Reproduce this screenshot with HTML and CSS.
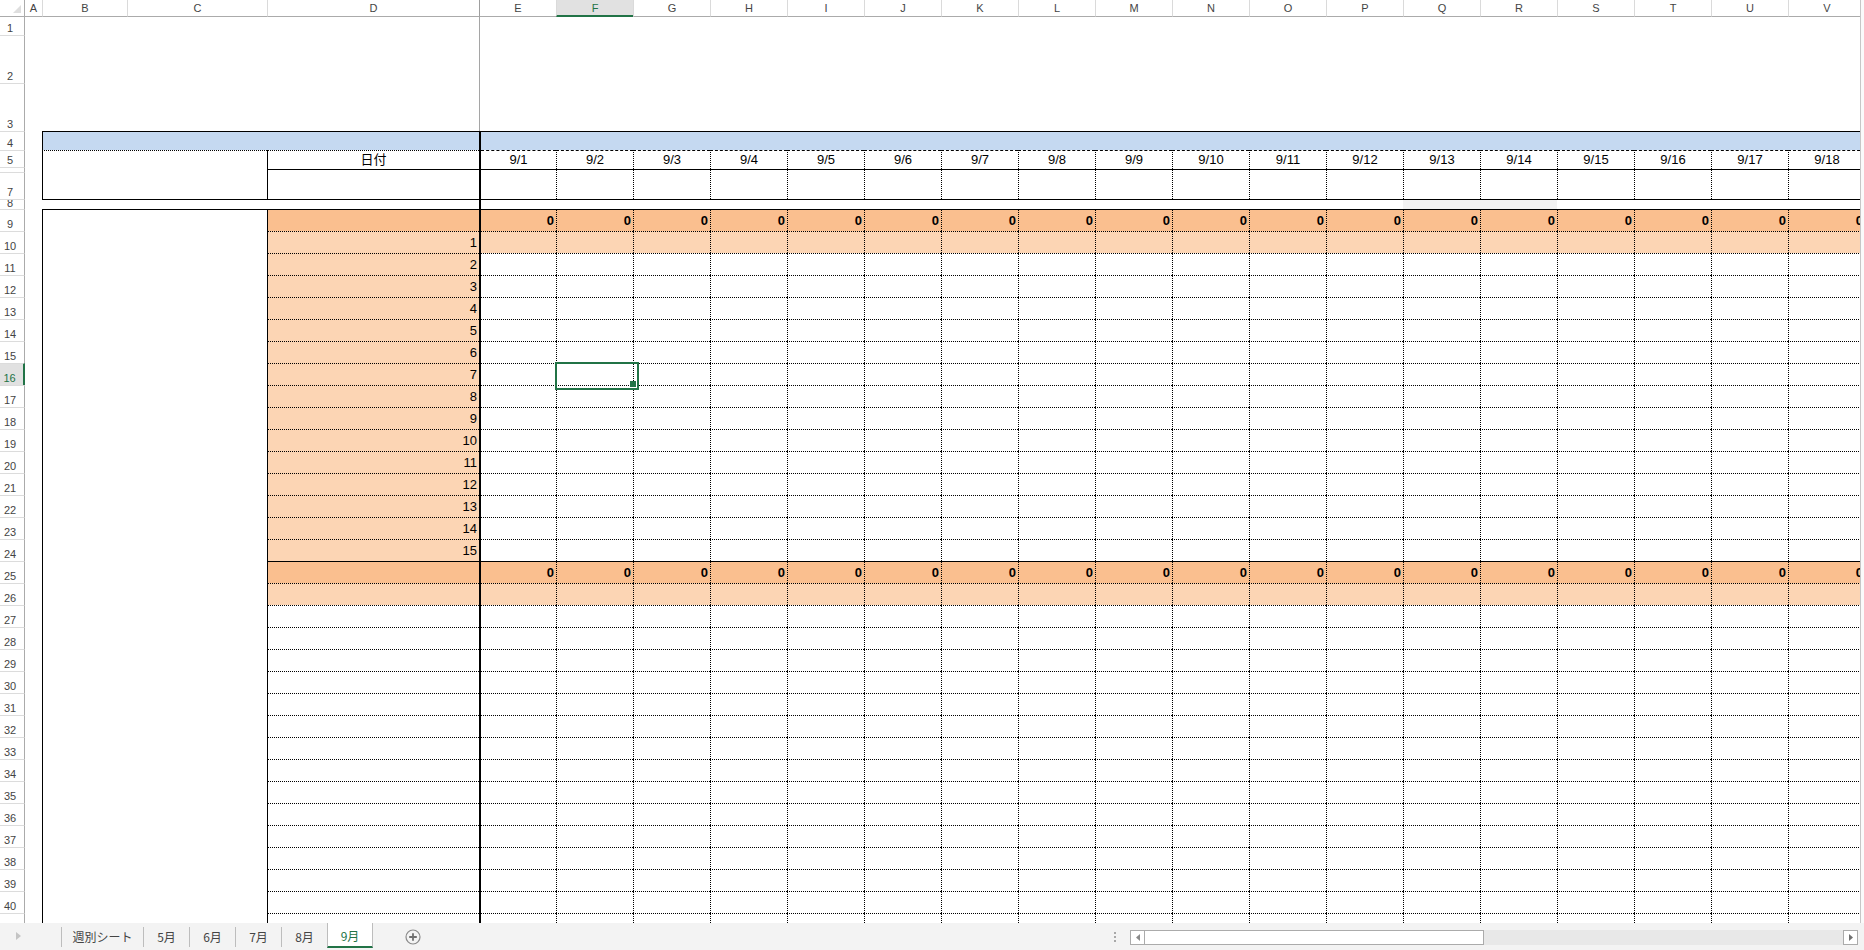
FILE: index.html
```html
<!DOCTYPE html>
<html lang="ja">
<head>
<meta charset="utf-8">
<title>9月</title>
<link rel="stylesheet" href="styles.css">
</head>
<body>
<div class="app">
 <div class="main">
  <div class="sheet">
   <div class="ch">
    <div class="corner"><svg width="8" height="8" viewBox="0 0 8 8"><polygon points="8,0 8,8 0,8" fill="#dedede"/></svg></div>
    <div class="ca">A</div><div class="cb">B</div><div class="cc">C</div><div class="cd">D</div>
    <div class="ce fz">E</div><div class="ce cur">F</div><div class="ce">G</div><div class="ce">H</div><div class="ce">I</div><div class="ce">J</div><div class="ce">K</div><div class="ce">L</div><div class="ce">M</div><div class="ce">N</div><div class="ce">O</div><div class="ce">P</div><div class="ce">Q</div><div class="ce">R</div><div class="ce">S</div><div class="ce">T</div><div class="ce">U</div><div class="ce">V</div>
   </div>
   <div class="body">
    <div class="rh">
     <div class="h18">1</div><div class="h48">2</div><div class="h48">3</div><div class="h19">4</div><div class="h17">5</div><div class="h5"></div><div class="h27">7</div><div class="h10">8</div>
     <div>9</div><div>10</div><div>11</div><div>12</div><div>13</div><div>14</div><div>15</div><div class="cur">16</div><div>17</div><div>18</div><div>19</div><div>20</div><div>21</div><div>22</div><div>23</div><div>24</div><div>25</div><div>26</div><div>27</div><div>28</div><div>29</div><div>30</div><div>31</div><div>32</div><div>33</div><div>34</div><div>35</div><div>36</div><div>37</div><div>38</div><div>39</div><div>40</div><div>41</div>
    </div>
    <div class="grid">
     <div class="row top"><p class="a"></p><p class="bc"></p><p class="d"></p><div class="rp"></div></div>
     <div class="row r4"><p class="a"></p><p class="bc"></p><p class="d"></p><div class="rp"></div></div>
     <div class="row r5"><p class="a"></p><p class="bc"></p><p class="d">日付</p><div class="rp"><i>9/1</i><i>9/2</i><i>9/3</i><i>9/4</i><i>9/5</i><i>9/6</i><i>9/7</i><i>9/8</i><i>9/9</i><i>9/10</i><i>9/11</i><i>9/12</i><i>9/13</i><i>9/14</i><i>9/15</i><i>9/16</i><i>9/17</i><i>9/18</i></div></div>
     <div class="row r67"><p class="a"></p><p class="bc"></p><p class="d"></p><div class="rp"><i></i><i></i><i></i><i></i><i></i><i></i><i></i><i></i><i></i><i></i><i></i><i></i><i></i><i></i><i></i><i></i><i></i><i></i></div></div>
     <div class="row r8"><p class="a"></p><p class="bc"></p><p class="d"></p><div class="rp"><i></i><i></i><i></i><i></i><i></i><i></i><i></i><i></i><i></i><i></i><i></i><i></i><i class="g"></i><i class="g"></i><i></i><i></i><i></i><i></i></div></div>
     <div class="row ts o1 r9"><p class="a"></p><p class="bc"></p><p class="d"></p><div class="rp"><i>0</i><i>0</i><i>0</i><i>0</i><i>0</i><i>0</i><i>0</i><i>0</i><i>0</i><i>0</i><i>0</i><i>0</i><i>0</i><i>0</i><i>0</i><i>0</i><i>0</i><i>0</i></div></div>
     <div class="row td o2"><p class="a"></p><p class="bc"></p><p class="d">1</p><div class="rp"><i></i><i></i><i></i><i></i><i></i><i></i><i></i><i></i><i></i><i></i><i></i><i></i><i></i><i></i><i></i><i></i><i></i><i></i></div></div>
     <div class="row td od"><p class="a"></p><p class="bc"></p><p class="d">2</p><div class="rp"><i></i><i></i><i></i><i></i><i></i><i></i><i></i><i></i><i></i><i></i><i></i><i></i><i></i><i></i><i></i><i></i><i></i><i></i></div></div>
     <div class="row td od"><p class="a"></p><p class="bc"></p><p class="d">3</p><div class="rp"><i></i><i></i><i></i><i></i><i></i><i></i><i></i><i></i><i></i><i></i><i></i><i></i><i></i><i></i><i></i><i></i><i></i><i></i></div></div>
     <div class="row td od"><p class="a"></p><p class="bc"></p><p class="d">4</p><div class="rp"><i></i><i></i><i></i><i></i><i></i><i></i><i></i><i></i><i></i><i></i><i></i><i></i><i></i><i></i><i></i><i></i><i></i><i></i></div></div>
     <div class="row td od"><p class="a"></p><p class="bc"></p><p class="d">5</p><div class="rp"><i></i><i></i><i></i><i></i><i></i><i></i><i></i><i></i><i></i><i></i><i></i><i></i><i></i><i></i><i></i><i></i><i></i><i></i></div></div>
     <div class="row td od"><p class="a"></p><p class="bc"></p><p class="d">6</p><div class="rp"><i></i><i></i><i></i><i></i><i></i><i></i><i></i><i></i><i></i><i></i><i></i><i></i><i></i><i></i><i></i><i></i><i></i><i></i></div></div>
     <div class="row td od"><p class="a"></p><p class="bc"></p><p class="d">7</p><div class="rp"><i></i><i class="sel"></i><i></i><i></i><i></i><i></i><i></i><i></i><i></i><i></i><i></i><i></i><i></i><i></i><i></i><i></i><i></i><i></i></div></div>
     <div class="row td od"><p class="a"></p><p class="bc"></p><p class="d">8</p><div class="rp"><i></i><i></i><i></i><i></i><i></i><i></i><i></i><i></i><i></i><i></i><i></i><i></i><i></i><i></i><i></i><i></i><i></i><i></i></div></div>
     <div class="row td od"><p class="a"></p><p class="bc"></p><p class="d">9</p><div class="rp"><i></i><i></i><i></i><i></i><i></i><i></i><i></i><i></i><i></i><i></i><i></i><i></i><i></i><i></i><i></i><i></i><i></i><i></i></div></div>
     <div class="row td od"><p class="a"></p><p class="bc"></p><p class="d">10</p><div class="rp"><i></i><i></i><i></i><i></i><i></i><i></i><i></i><i></i><i></i><i></i><i></i><i></i><i></i><i></i><i></i><i></i><i></i><i></i></div></div>
     <div class="row td od"><p class="a"></p><p class="bc"></p><p class="d">11</p><div class="rp"><i></i><i></i><i></i><i></i><i></i><i></i><i></i><i></i><i></i><i></i><i></i><i></i><i></i><i></i><i></i><i></i><i></i><i></i></div></div>
     <div class="row td od"><p class="a"></p><p class="bc"></p><p class="d">12</p><div class="rp"><i></i><i></i><i></i><i></i><i></i><i></i><i></i><i></i><i></i><i></i><i></i><i></i><i></i><i></i><i></i><i></i><i></i><i></i></div></div>
     <div class="row td od"><p class="a"></p><p class="bc"></p><p class="d">13</p><div class="rp"><i></i><i></i><i></i><i></i><i></i><i></i><i></i><i></i><i></i><i></i><i></i><i></i><i></i><i></i><i></i><i></i><i></i><i></i></div></div>
     <div class="row td od"><p class="a"></p><p class="bc"></p><p class="d">14</p><div class="rp"><i></i><i></i><i></i><i></i><i></i><i></i><i></i><i></i><i></i><i></i><i></i><i></i><i></i><i></i><i></i><i></i><i></i><i></i></div></div>
     <div class="row td od"><p class="a"></p><p class="bc"></p><p class="d">15</p><div class="rp"><i></i><i></i><i></i><i></i><i></i><i></i><i></i><i></i><i></i><i></i><i></i><i></i><i></i><i></i><i></i><i></i><i></i><i></i></div></div>
     <div class="row ts o1"><p class="a"></p><p class="bc"></p><p class="d"></p><div class="rp"><i>0</i><i>0</i><i>0</i><i>0</i><i>0</i><i>0</i><i>0</i><i>0</i><i>0</i><i>0</i><i>0</i><i>0</i><i>0</i><i>0</i><i>0</i><i>0</i><i>0</i><i>0</i></div></div>
     <div class="row td o2"><p class="a"></p><p class="bc"></p><p class="d"></p><div class="rp"><i></i><i></i><i></i><i></i><i></i><i></i><i></i><i></i><i></i><i></i><i></i><i></i><i></i><i></i><i></i><i></i><i></i><i></i></div></div>
     <div class="row td"><p class="a"></p><p class="bc"></p><p class="d"></p><div class="rp"><i></i><i></i><i></i><i></i><i></i><i></i><i></i><i></i><i></i><i></i><i></i><i></i><i></i><i></i><i></i><i></i><i></i><i></i></div></div>
     <div class="row td"><p class="a"></p><p class="bc"></p><p class="d"></p><div class="rp"><i></i><i></i><i></i><i></i><i></i><i></i><i></i><i></i><i></i><i></i><i></i><i></i><i></i><i></i><i></i><i></i><i></i><i></i></div></div>
     <div class="row td"><p class="a"></p><p class="bc"></p><p class="d"></p><div class="rp"><i></i><i></i><i></i><i></i><i></i><i></i><i></i><i></i><i></i><i></i><i></i><i></i><i></i><i></i><i></i><i></i><i></i><i></i></div></div>
     <div class="row td"><p class="a"></p><p class="bc"></p><p class="d"></p><div class="rp"><i></i><i></i><i></i><i></i><i></i><i></i><i></i><i></i><i></i><i></i><i></i><i></i><i></i><i></i><i></i><i></i><i></i><i></i></div></div>
     <div class="row td"><p class="a"></p><p class="bc"></p><p class="d"></p><div class="rp"><i></i><i></i><i></i><i></i><i></i><i></i><i></i><i></i><i></i><i></i><i></i><i></i><i></i><i></i><i></i><i></i><i></i><i></i></div></div>
     <div class="row td"><p class="a"></p><p class="bc"></p><p class="d"></p><div class="rp"><i></i><i></i><i></i><i></i><i></i><i></i><i></i><i></i><i></i><i></i><i></i><i></i><i></i><i></i><i></i><i></i><i></i><i></i></div></div>
     <div class="row td"><p class="a"></p><p class="bc"></p><p class="d"></p><div class="rp"><i></i><i></i><i></i><i></i><i></i><i></i><i></i><i></i><i></i><i></i><i></i><i></i><i></i><i></i><i></i><i></i><i></i><i></i></div></div>
     <div class="row td"><p class="a"></p><p class="bc"></p><p class="d"></p><div class="rp"><i></i><i></i><i></i><i></i><i></i><i></i><i></i><i></i><i></i><i></i><i></i><i></i><i></i><i></i><i></i><i></i><i></i><i></i></div></div>
     <div class="row td"><p class="a"></p><p class="bc"></p><p class="d"></p><div class="rp"><i></i><i></i><i></i><i></i><i></i><i></i><i></i><i></i><i></i><i></i><i></i><i></i><i></i><i></i><i></i><i></i><i></i><i></i></div></div>
     <div class="row td"><p class="a"></p><p class="bc"></p><p class="d"></p><div class="rp"><i></i><i></i><i></i><i></i><i></i><i></i><i></i><i></i><i></i><i></i><i></i><i></i><i></i><i></i><i></i><i></i><i></i><i></i></div></div>
     <div class="row td"><p class="a"></p><p class="bc"></p><p class="d"></p><div class="rp"><i></i><i></i><i></i><i></i><i></i><i></i><i></i><i></i><i></i><i></i><i></i><i></i><i></i><i></i><i></i><i></i><i></i><i></i></div></div>
     <div class="row td"><p class="a"></p><p class="bc"></p><p class="d"></p><div class="rp"><i></i><i></i><i></i><i></i><i></i><i></i><i></i><i></i><i></i><i></i><i></i><i></i><i></i><i></i><i></i><i></i><i></i><i></i></div></div>
     <div class="row td"><p class="a"></p><p class="bc"></p><p class="d"></p><div class="rp"><i></i><i></i><i></i><i></i><i></i><i></i><i></i><i></i><i></i><i></i><i></i><i></i><i></i><i></i><i></i><i></i><i></i><i></i></div></div>
     <div class="row td"><p class="a"></p><p class="bc"></p><p class="d"></p><div class="rp"><i></i><i></i><i></i><i></i><i></i><i></i><i></i><i></i><i></i><i></i><i></i><i></i><i></i><i></i><i></i><i></i><i></i><i></i></div></div>
     <div class="row td"><p class="a"></p><p class="bc"></p><p class="d"></p><div class="rp"><i></i><i></i><i></i><i></i><i></i><i></i><i></i><i></i><i></i><i></i><i></i><i></i><i></i><i></i><i></i><i></i><i></i><i></i></div></div>
     <div class="row ts o1 r41"><p class="a"></p><p class="bc"></p><p class="d">ユニーク 件 数</p><div class="rp"><i></i><i></i><i></i><i></i><i></i><i></i><i></i><i></i><i></i><i></i><i></i><i></i><i></i><i></i><i></i><i></i><i></i><i></i></div></div>
    </div>
   </div>
  </div>
  <div class="vstrip"></div>
 </div>
 <div class="tabbar">
  <div class="nav"><svg width="5" height="8" viewBox="0 0 5 8"><polygon points="0,0 5,4 0,8" fill="#c4c4c4"/></svg></div>
  <div class="tab w1">週別シート</div>
  <div class="tab">5月</div>
  <div class="tab">6月</div>
  <div class="tab">7月</div>
  <div class="tab">8月</div>
  <div class="tab on">9月</div>
  <div class="add"><svg width="16" height="16" viewBox="0 0 16 16"><circle cx="8" cy="8" r="7" fill="none" stroke="#8a8a8a" stroke-width="1.2"/><path d="M8 4.2v7.6M4.2 8h7.6" stroke="#6f6f6f" stroke-width="1.8"/></svg></div>
  <div class="spacer"></div>
  <div class="grip"><span></span><span></span><span></span></div>
  <div class="hs">
   <div class="sbtn"><svg width="4" height="7" viewBox="0 0 4 7"><polygon points="4,0 0,3.5 4,7" fill="#8a8a8a"/></svg></div>
   <div class="thumb"></div>
   <div class="track"></div>
   <div class="sbtn"><svg width="4" height="7" viewBox="0 0 4 7"><polygon points="0,0 4,3.5 0,7" fill="#707070"/></svg></div>
  </div>
  <div class="end"></div>
 </div>
</div>
</body>
</html>
```
FILE: styles.css
```css
*{box-sizing:border-box;margin:0;padding:0}
html,body{width:1864px;height:950px;overflow:hidden;background:#fff}
body{font-family:"Liberation Sans","Noto Sans CJK JP",sans-serif}
.app{display:flex;flex-direction:column;width:1864px;height:950px}
.main{display:flex;height:923px;flex:none}
.sheet{width:1860px;height:923px;overflow:hidden;display:flex;flex-direction:column;flex:none}
.vstrip{width:4px;border-left:1px solid #c6c6c6;background:#fafafa}

/* column header */
.ch{display:flex;flex:none;height:17px;font:11px "Liberation Sans",sans-serif;color:#444;line-height:15px}
.ch div{flex:none;height:17px;border-bottom:1px solid #ababab;border-left:1px solid #dadada;text-align:center;padding-top:1px}
.ch .corner{width:25px;border-left:0;border-right:1px solid #ababab;display:flex;justify-content:flex-end;align-items:flex-end;padding:0 3px 3px 0}
.ch .ca{width:17px;border-left:0}
.ch .cb{width:85px}
.ch .cc{width:140px}
.ch .cd{width:212px}
.ch .ce{width:77px}
.ch .fz{border-left-color:#9e9e9e}
.ch .cur{background:#e1e1e1;color:#217346;border-bottom:2px solid #217346}

.body{display:flex;flex:1;overflow:hidden}

/* row header */
.rh{width:25px;flex:none;display:flex;flex-direction:column;font:11px "Liberation Sans",sans-serif;color:#444}
.rh div{flex:none;height:22px;border-top:1px solid #dcdcdc;border-right:1px solid #ababab;display:flex;align-items:flex-end;justify-content:center;padding:0 4px 1px 0;line-height:11px;overflow:hidden}
.rh div:first-child{border-top:0}
.rh .h18{height:18px}
.rh .h48{height:48px}
.rh .h19{height:19px}
.rh .h17{height:17px}
.rh .h5{height:5px}
.rh .h27{height:27px}
.rh .h10{height:10px;padding-bottom:0}
.rh .cur{background:#e1e1e1;color:#217346;border-right:2px solid #217346}

/* grid */
.grid{flex:none;width:1840px;display:flex;flex-direction:column;font:13px "Liberation Sans","Noto Sans CJK JP",sans-serif;color:#000}
.row{display:flex;flex:none;height:22px;line-height:21px;white-space:nowrap}
.row>p,.rp{flex:none;height:100%}
.a{width:17px}
.bc{width:225px;border-left:1px solid #000}
.d{width:212px;border-left:1px solid #000;text-align:right;padding-right:2px}
.rp{display:flex;width:1381px;border-left:2px solid #000}
.rp i{flex:none;width:77px;height:100%;border-left:1px dotted #000;font-style:normal;text-align:right;padding-right:2px}
.rp i:first-child{width:75px;border-left:0}

.top{height:114px}
.top .bc,.top .d{border-left:0}
.top .rp{border-left:1px solid #a5a5a5}

.r4{height:19px}
.r4 .d{border-left:0}
.r4 .bc,.r4 .d,.r4 .rp{border-top:1px solid #000;background:#c5d9f1}

.r5{height:19px;line-height:18px}
.r5 .bc,.r5 .d{border-top:1px dotted #000}
.r5 .d{text-align:center;padding:0}
.r5 .rp i{border-top:1px dashed #000;text-align:center;padding:0}

.r67{height:30px}
.r67 .d,.r67 .rp i{border-top:1px solid #000}

.r8{height:10px}
.r8 .bc,.r8 .d{border-left:0;border-top:1px solid #000}
.r8 .rp i{border-left:0;border-top:1px solid #000}
.r8 .rp i.g{background:#f2f2f2}

.ts .d,.ts .rp i{border-top:1px solid #000}
.r9 .bc{border-top:1px solid #000}
.td .d,.td .rp i{border-top:1px dotted #000}
.o1 .d,.o1 .rp i{background:#fabf8f;font-weight:bold}
.o2 .d,.o2 .rp i{background:#fcd5b4}
.od .d{background:#fcd5b4}
.r41 .d{text-align:center;padding:0}

.sel{position:relative;z-index:2}
.sel::after{content:"";position:absolute;left:-2px;top:-2px;width:80px;height:24px;border:2px solid #217346}
.sel::before{content:"";position:absolute;right:-3px;bottom:-2px;width:6px;height:6px;background:#217346;z-index:1}

/* tab bar */
.tabbar{display:flex;height:27px;flex:none;background:#f3f3f3;font:12px "Noto Sans CJK JP",sans-serif;color:#444}
.nav{width:61px;flex:none;display:flex;align-items:center;padding:0 0 1px 16px}
.tab{flex:none;height:20px;margin-top:4px;width:46px;border-left:1px solid #bdbdbd;display:flex;align-items:center;justify-content:center;line-height:1}
.tab.w1{width:82px}
.tab.on{height:25px;margin-top:0;padding-top:2px;background:#fff;color:#217346;border-right:1px solid #bdbdbd;border-bottom:2px solid #217346}
.add{flex:none;margin-left:32px;display:flex;align-items:center}
.spacer{flex:1}
.grip{flex:none;width:3px;margin-right:14px;display:flex;flex-direction:column;justify-content:center;gap:2px;align-items:center}
.grip span{width:2px;height:2px;background:#a8a8a8}
.hs{flex:none;width:728px;height:15px;margin-top:7px;display:flex}
.sbtn{flex:none;width:15px;height:15px;border:1px solid #ababab;background:#fff;display:flex;align-items:center;justify-content:center}
.thumb{flex:none;width:339px;height:15px;border:1px solid #ababab;border-left:0;background:#fff}
.track{flex:1;background:#e8e8e8}
.end{flex:none;width:6px}
```
